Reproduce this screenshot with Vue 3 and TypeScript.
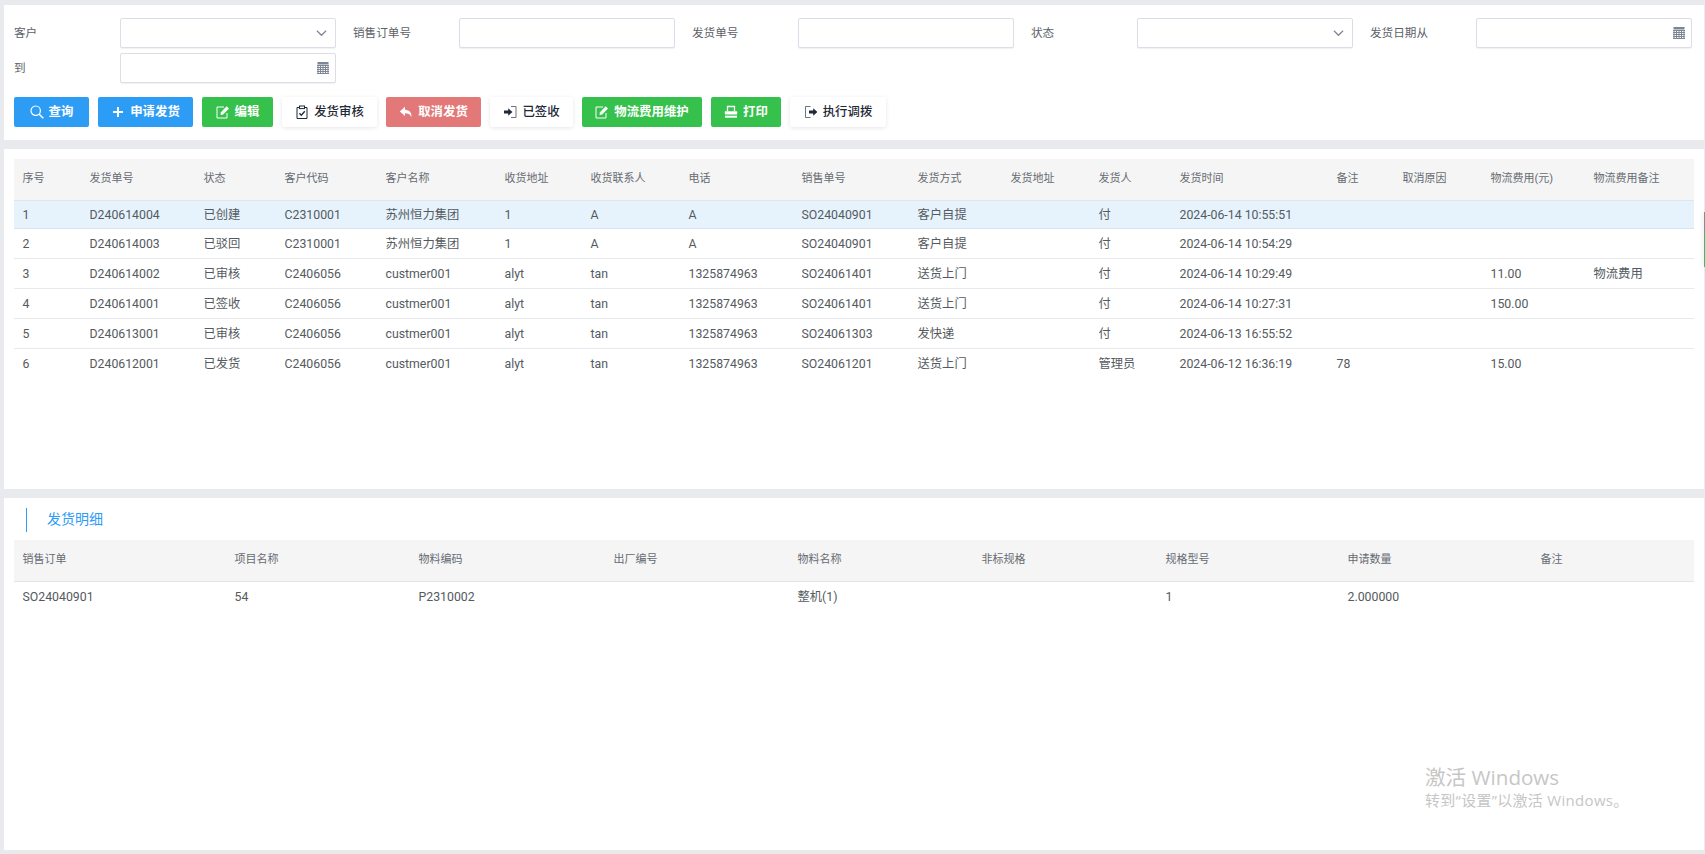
<template>
  <div class="page">
    <section class="panel search-panel">
      <div class="search-form">
        <div v-for="field in fields" :key="field.label" class="form-item">
          <label class="form-label">{{ field.label }}</label>
          <div class="form-control">
            <svg v-if="field.type === 'select'" class="control-icon arrow" viewBox="0 0 12 8">
              <path d="M1 1.5 6 6.5 11 1.5" fill="none" stroke="currentColor" stroke-width="1.3" />
            </svg>
            <svg v-else-if="field.type === 'date'" class="control-icon calendar" viewBox="0 0 12 12">
              <rect x="0.5" y="0" width="11" height="2.5" fill="currentColor" />
              <path d="M0 3.5h12M0 5.5h12M0 7.5h12M0 9.5h12M0 11.5h12M1 3v9M3.5 3v9M6 3v9M8.5 3v9M11 3v9" stroke="currentColor" stroke-width="1" fill="none" />
            </svg>
          </div>
        </div>
      </div>

      <div class="toolbar">
        <button
          v-for="btn in buttons"
          :key="btn.text"
          type="button"
          class="btn"
          :class="'btn-' + btn.kind"
          :style="{ width: btn.width + 'px' }"
        >
          <svg class="btn-icon" viewBox="0 0 14 14">
            <template v-if="btn.icon === 'search'">
              <circle cx="5.7" cy="5.7" r="4.7" fill="none" stroke="currentColor" stroke-width="1.2" />
              <path d="M9.2 9.2 13.3 13.3" stroke="currentColor" stroke-width="1.6" />
            </template>
            <path v-else-if="btn.icon === 'plus'" d="M7 2v10M2 7h10" stroke="currentColor" stroke-width="2" fill="none" />
            <template v-else-if="btn.icon === 'edit'">
              <path d="M11 8v5H1V2h7" fill="none" stroke="currentColor" stroke-width="1" />
              <path d="M4.5 10 5 7.3 10.6 1.2 13 3.4 7.2 9.5Z" fill="currentColor" />
            </template>
            <template v-else-if="btn.icon === 'check'">
              <path d="M4 2.5H2v11h10v-11h-2" fill="none" stroke="currentColor" stroke-width="1" />
              <rect x="4.5" y="1" width="5" height="2.6" fill="none" stroke="currentColor" stroke-width="1" />
              <path d="M4.4 8.2 6.3 10.2 9.8 6.2" fill="none" stroke="currentColor" stroke-width="1.3" />
            </template>
            <path v-else-if="btn.icon === 'reply'" d="M6 1.8.8 6.4 6 11V8.2c3.2 0 5.2.8 6.3 4 .8-4.4-1.8-7.3-6.3-7.5Z" fill="currentColor" />
            <template v-else-if="btn.icon === 'signin'">
              <path d="M8 1.5h5v11H8" fill="none" stroke="#6b7280" stroke-width="1" />
              <path d="M1 5.4h4.200V3.200L9.400 7l-4.200 3.800V8.600H1Z" fill="currentColor" />
            </template>
            <template v-else-if="btn.icon === 'print'">
              <path d="M3.5 6V1.500h7V6" fill="none" stroke="currentColor" stroke-width="1.3" />
              <rect x="0.8" y="6.200" width="12.400" height="3.300" rx="0.6" fill="currentColor" />
              <path d="M1 11.700h12" stroke="currentColor" stroke-width="2" />
            </template>
            <template v-else-if="btn.icon === 'signout'">
              <path d="M6.5 1.500h-5v11h5" fill="none" stroke="#6b7280" stroke-width="1" />
              <path d="M5 5.400h4.200V3.200L13.400 7l-4.200 3.800V8.600H5Z" fill="currentColor" />
            </template>
          </svg>
          <span>{{ btn.text }}</span>
        </button>
      </div>
    </section>

    <section class="panel list-panel">
      <table class="data-table ship-table">
        <colgroup>
          <col v-for="col in shipColumns" :key="col.title" :style="{ width: col.width + 'px' }" />
        </colgroup>
        <thead>
          <tr>
            <th v-for="col in shipColumns" :key="col.title">{{ col.title }}</th>
          </tr>
        </thead>
        <tbody>
          <tr v-for="(row, i) in shipRows" :key="row[1]" :class="{ selected: i === 0 }">
            <td v-for="(cell, j) in row" :key="j">{{ cell }}</td>
          </tr>
        </tbody>
      </table>
    </section>

    <section class="panel detail-panel">
      <div class="section-title">发货明细</div>
      <table class="data-table detail-table">
        <colgroup>
          <col v-for="col in detailColumns" :key="col.title" :style="{ width: col.width + 'px' }" />
        </colgroup>
        <thead>
          <tr>
            <th v-for="col in detailColumns" :key="col.title">{{ col.title }}</th>
          </tr>
        </thead>
        <tbody>
          <tr v-for="row in detailRows" :key="row[0]">
            <td v-for="(cell, j) in row" :key="j">{{ cell }}</td>
          </tr>
        </tbody>
      </table>
    </section>

    <div class="side-tab"></div>
    <div class="activation">
      <p class="activation-title">激活 Windows</p>
      <p class="activation-sub">转到“设置”以激活 Windows。</p>
    </div>
  </div>
</template>

<script setup lang="ts">
const fields = [
  { label: '客户', type: 'select' },
  { label: '销售订单号', type: 'text' },
  { label: '发货单号', type: 'text' },
  { label: '状态', type: 'select' },
  { label: '发货日期从', type: 'date' },
  { label: '到', type: 'date' },
];

const buttons = [
  { text: '查询', icon: 'search', kind: 'blue', width: 75 },
  { text: '申请发货', icon: 'plus', kind: 'blue', width: 95 },
  { text: '编辑', icon: 'edit', kind: 'green', width: 71 },
  { text: '发货审核', icon: 'check', kind: 'white', width: 95 },
  { text: '取消发货', icon: 'reply', kind: 'red', width: 95 },
  { text: '已签收', icon: 'signin', kind: 'white', width: 83 },
  { text: '物流费用维护', icon: 'edit', kind: 'green', width: 120 },
  { text: '打印', icon: 'print', kind: 'green', width: 70 },
  { text: '执行调拨', icon: 'signout', kind: 'white', width: 96 },
];

const shipColumns = [
  { title: '序号', width: 67 },
  { title: '发货单号', width: 114 },
  { title: '状态', width: 81 },
  { title: '客户代码', width: 101 },
  { title: '客户名称', width: 119 },
  { title: '收货地址', width: 86 },
  { title: '收货联系人', width: 98 },
  { title: '电话', width: 113 },
  { title: '销售单号', width: 116 },
  { title: '发货方式', width: 93 },
  { title: '发货地址', width: 88 },
  { title: '发货人', width: 81 },
  { title: '发货时间', width: 157 },
  { title: '备注', width: 66 },
  { title: '取消原因', width: 88 },
  { title: '物流费用(元)', width: 103 },
  { title: '物流费用备注', width: 109 },
];

const shipRows = [
  ['1', 'D240614004', '已创建', 'C2310001', '苏州恒力集团', '1', 'A', 'A', 'SO24040901', '客户自提', '', '付', '2024-06-14 10:55:51', '', '', '', ''],
  ['2', 'D240614003', '已驳回', 'C2310001', '苏州恒力集团', '1', 'A', 'A', 'SO24040901', '客户自提', '', '付', '2024-06-14 10:54:29', '', '', '', ''],
  ['3', 'D240614002', '已审核', 'C2406056', 'custmer001', 'alyt', 'tan', '1325874963', 'SO24061401', '送货上门', '', '付', '2024-06-14 10:29:49', '', '', '11.00', '物流费用'],
  ['4', 'D240614001', '已签收', 'C2406056', 'custmer001', 'alyt', 'tan', '1325874963', 'SO24061401', '送货上门', '', '付', '2024-06-14 10:27:31', '', '', '150.00', ''],
  ['5', 'D240613001', '已审核', 'C2406056', 'custmer001', 'alyt', 'tan', '1325874963', 'SO24061303', '发快递', '', '付', '2024-06-13 16:55:52', '', '', '', ''],
  ['6', 'D240612001', '已发货', 'C2406056', 'custmer001', 'alyt', 'tan', '1325874963', 'SO24061201', '送货上门', '', '管理员', '2024-06-12 16:36:19', '78', '', '15.00', ''],
];

const detailColumns = [
  { title: '销售订单', width: 212 },
  { title: '项目名称', width: 184 },
  { title: '物料编码', width: 195 },
  { title: '出厂编号', width: 184 },
  { title: '物料名称', width: 184 },
  { title: '非标规格', width: 184 },
  { title: '规格型号', width: 182 },
  { title: '申请数量', width: 193 },
  { title: '备注', width: 162 },
];

const detailRows = [
  ['SO24040901', '54', 'P2310002', '', '整机(1)', '', '1', '2.000000', ''],
];
</script>

<style>
html,
body {
  margin: 0;
  background: #e8eaed;
}
</style>

<style scoped>
.page {
  position: relative;
  display: flex;
  flex-direction: column;
  gap: 9px;
  box-sizing: border-box;
  height: 854px;
  padding: 5px 1px 4px 4px;
  overflow: hidden;
  background: #e8eaed;
  font-family: Roboto, "Noto Sans CJK SC", sans-serif;
  font-size: 12.3px;
  line-height: 16px;
  color: #555a60;
}

.panel {
  box-sizing: border-box;
  padding: 0 10px;
  background: #fff;
}

.search-panel {
  height: 135px;
  padding-top: 13px;
}

.search-form {
  display: grid;
  grid-template-columns: repeat(5, 339px);
  row-gap: 5px;
}

.form-item {
  display: flex;
  align-items: center;
  height: 30px;
}

.form-label {
  width: 106px;
  flex: none;
  color: #5c6168;
  font-size: 11.6px;
}

.form-control {
  position: relative;
  box-sizing: border-box;
  width: 216px;
  height: 30px;
  border: 1px solid #dcdde6;
  border-radius: 2px;
  background: #fff;
  box-shadow: 0 1px 1px rgba(0, 0, 0, 0.06);
}

.control-icon {
  position: absolute;
  top: 50%;
  transform: translateY(-50%);
  color: #7d8694;
}

.arrow {
  right: 8px;
  width: 11px;
  height: 8px;
}

.calendar {
  right: 6px;
  width: 12px;
  height: 12px;
}

.toolbar {
  display: flex;
  gap: 9px;
  margin-top: 14px;
}

.btn {
  display: flex;
  align-items: center;
  justify-content: center;
  box-sizing: border-box;
  height: 30px;
  padding: 0;
  border: none;
  border-radius: 2px;
  font-family: inherit;
  font-size: 12.4px;
  font-weight: 700;
  line-height: 1;
}

.btn-icon {
  flex: none;
  width: 14px;
  height: 14px;
  margin-right: 5px;
}

.btn-blue {
  background: #2d9cf4;
  color: #fff;
}

.btn-green {
  background: #35c14b;
  color: #fff;
}

.btn-red {
  background: #e27878;
  color: #fff;
}

.btn-white {
  background: #fff;
  color: #1f2937;
  font-weight: 500;
  box-shadow: 0 1px 4px rgba(0, 0, 0, 0.1);
}

.list-panel {
  height: 340px;
  padding-top: 10px;
}

.detail-panel {
  flex: 1;
  padding-top: 10px;
}

.section-title {
  height: 24px;
  margin: 0 0 8px 12px;
  padding-left: 20px;
  border-left: 1px solid #2d9cf4;
  color: #2d9cf4;
  font-size: 14px;
  line-height: 22px;
}

.data-table {
  width: 1680px;
  border-collapse: collapse;
  table-layout: fixed;
}

.data-table th {
  box-sizing: border-box;
  height: 41px;
  padding: 0 8px 0 8.5px;
  border-bottom: 1px solid #e3e4e7;
  background: #f5f5f5;
  color: #666b72;
  font-size: 11px;
  font-weight: 400;
  text-align: left;
  white-space: nowrap;
}

.data-table td {
  box-sizing: border-box;
  height: 30px;
  padding: 1px 8px 0 8.5px;
  border-bottom: 1px solid #e8e9ec;
  white-space: nowrap;
}

.data-table tbody tr.selected td {
  height: 28px;
  background: #e6f3fd;
  border-bottom-color: #d6e4f0;
}

.data-table tbody tr:last-child td {
  border-bottom: none;
}

.side-tab {
  position: absolute;
  top: 212px;
  right: 0;
  width: 1.5px;
  height: 55px;
  background: linear-gradient(#8a8a8a 0 36%, #35c16b 36% 100%);
  box-shadow: -1px 0 4px rgba(0, 0, 0, 0.2);
}

.activation {
  position: absolute;
  top: 764px;
  left: 1425px;
  color: #c6c6c6;
  font-family: "Open Sans", "Noto Sans CJK SC", sans-serif;
  pointer-events: none;
}

.activation p {
  margin: 0;
  white-space: nowrap;
}

.activation-title {
  font-size: 20.6px;
  line-height: 26px;
}

.activation-sub {
  font-size: 15px;
  line-height: 20px;
  letter-spacing: 0.3px;
}
</style>
